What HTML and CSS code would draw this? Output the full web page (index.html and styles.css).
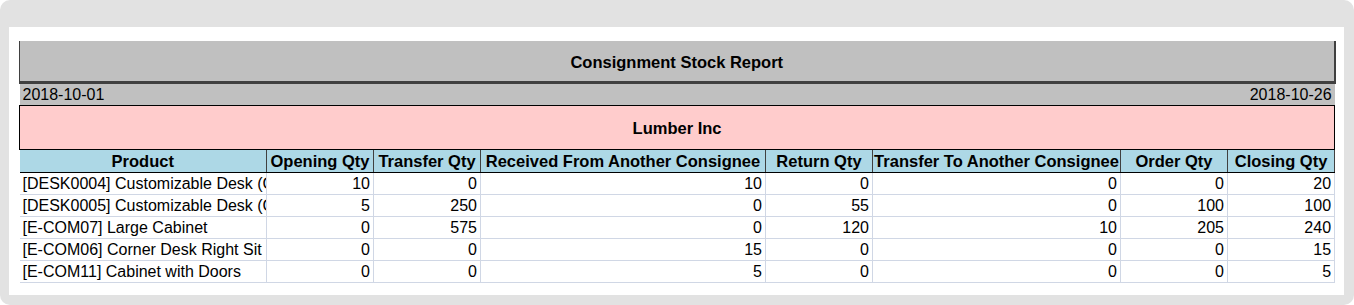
FILE: index.html
```html
<!DOCTYPE html>
<html>
<head>
<meta charset="utf-8">
<link rel="stylesheet" href="styles.css">
</head>
<body>
<div class="frame">
  <div class="panel">
    <table class="report">
      <colgroup>
        <col style="width:247px"><col style="width:107px"><col style="width:107px"><col style="width:285px">
        <col style="width:107px"><col style="width:248px"><col style="width:107px"><col style="width:107px">
      </colgroup>
      <tr class="title-row"><td colspan="8">Consignment Stock Report</td></tr>
      <tr class="date-row"><td colspan="4" class="left">2018-10-01</td><td colspan="4" class="right">2018-10-26</td></tr>
      <tr class="company-row"><td colspan="8">Lumber Inc</td></tr>
      <tr class="head-row">
        <th>Product</th><th>Opening Qty</th><th>Transfer Qty</th><th>Received From Another Consignee</th>
        <th>Return Qty</th><th>Transfer To Another Consignee</th><th>Order Qty</th><th>Closing Qty</th>
      </tr>
      <tr class="data-row"><td class="prod">[DESK0004] Customizable Desk (Custom, White)</td><td>10</td><td>0</td><td>10</td><td>0</td><td>0</td><td>0</td><td>20</td></tr>
      <tr class="data-row"><td class="prod">[DESK0005] Customizable Desk (Custom, Black)</td><td>5</td><td>250</td><td>0</td><td>55</td><td>0</td><td>100</td><td>100</td></tr>
      <tr class="data-row"><td class="prod">[E-COM07] Large Cabinet</td><td>0</td><td>575</td><td>0</td><td>120</td><td>10</td><td>205</td><td>240</td></tr>
      <tr class="data-row"><td class="prod">[E-COM06] Corner Desk Right Sit</td><td>0</td><td>0</td><td>15</td><td>0</td><td>0</td><td>0</td><td>15</td></tr>
      <tr class="data-row"><td class="prod">[E-COM11] Cabinet with Doors</td><td>0</td><td>0</td><td>5</td><td>0</td><td>0</td><td>0</td><td>5</td></tr>
    </table>
  </div>
</div>
</body>
</html>
```
FILE: styles.css
```css
html, body {
  margin: 0;
  padding: 0;
  background: #ffffff;
}
body {
  font-family: "Liberation Sans", Arial, sans-serif;
  font-size: 16px;
  color: #000;
}
.frame {
  width: 1354px;
  height: 305px;
  box-sizing: border-box;
  background: #e2e2e2;
  border-radius: 10px;
  padding: 27px 10px 10px 9px;
}
.panel {
  background: #ffffff;
  height: 268px;
  box-sizing: border-box;
  padding: 14px 10px 0 10px;
}
.report {
  border-collapse: collapse;
  table-layout: fixed;
  width: 1316px;
}
.report td, .report th {
  padding: 0 3px;
  white-space: nowrap;
  overflow: hidden;
  line-height: 18px;
}
.title-row td {
  height: 38px;
  padding-top: 2px;
  background: #c0c0c0;
  text-align: center;
  font-weight: bold;
  font-size: 16.5px;
  border-left: 1px solid #404040;
  border-right: 2px solid #404040;
  border-bottom: 3px solid #404040;
}
.date-row td {
  height: 20px;
  background: #c0c0c0;
  border-bottom: 1px solid #000;
  padding-top: 1px;
}
.date-row .left { text-align: left; }
.date-row .right { text-align: right; }
.company-row td {
  height: 43px;
  background: #ffcccc;
  text-align: center;
  font-weight: bold;
  font-size: 16.5px;
  border: 1px solid #000;
}
.head-row th {
  height: 22px;
  background: #add8e6;
  font-weight: bold;
  font-size: 16.5px;
  text-align: center;
  border: 1px solid #404040;
  border-top: 1px solid #000;
  border-bottom: 1px solid #000;
  padding: 0;
}
.head-row th:first-child { border-left: none; }
.data-row td {
  height: 21px;
  text-align: right;
  border: 1px solid #d0d7e5;
}
.data-row td:first-child { border-left: none; }
.data-row td.prod {
  text-align: left;
  text-overflow: clip;
}
```
